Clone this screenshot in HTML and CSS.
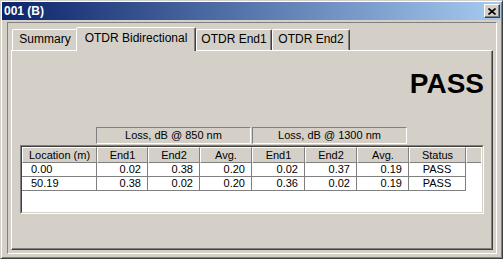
FILE: index.html
```html
<!DOCTYPE html>
<html>
<head>
  <title>001 (B)</title>
  <link rel="stylesheet" href="styles.css">
</head>
<body>

  <div class="window">
    <div class="titlebar">
      <span class="title">001 (B)</span>
      <span class="close-btn">
        <svg width="8" height="7" viewBox="0 0 8 7">
          <path d="M0.5 0.5 L7.5 6.5 M7.5 0.5 L0.5 6.5" stroke="#000" stroke-width="1.6" fill="none"/>
        </svg>
      </span>
    </div>

    <div class="frame">
      <div class="tabs">
        <div class="tab tab-summary">Summary</div>
        <div class="tab tab-bidir active">OTDR Bidirectional</div>
        <div class="tab tab-end1">OTDR End1</div>
        <div class="tab tab-end2">OTDR End2</div>
      </div>

      <div class="panel">
        <div class="verdict">PASS</div>

        <div class="groups">
          <div class="group">Loss, dB @ 850 nm</div>
          <div class="group">Loss, dB @ 1300 nm</div>
        </div>

        <div class="grid-box">
          <div class="grid-inner">
            <table class="grid">
              <colgroup>
                <col style="width:75px">
                <col style="width:51px">
                <col style="width:52px">
                <col style="width:52px">
                <col style="width:53px">
                <col style="width:52px">
                <col style="width:52px">
                <col style="width:57px">
                <col style="width:15px">
              </colgroup>
              <thead>
                <tr>
                  <th>Location (m)</th>
                  <th>End1</th>
                  <th>End2</th>
                  <th>Avg.</th>
                  <th>End1</th>
                  <th>End2</th>
                  <th>Avg.</th>
                  <th>Status</th>
                  <th class="fill"></th>
                </tr>
              </thead>
              <tbody>
                <tr>
                  <td class="loc">0.00</td>
                  <td>0.02</td>
                  <td>0.38</td>
                  <td>0.20</td>
                  <td>0.02</td>
                  <td>0.37</td>
                  <td>0.19</td>
                  <td class="status">PASS</td>
                  <td class="fill"></td>
                </tr>
                <tr>
                  <td class="loc">50.19</td>
                  <td>0.38</td>
                  <td>0.02</td>
                  <td>0.20</td>
                  <td>0.36</td>
                  <td>0.02</td>
                  <td>0.19</td>
                  <td class="status">PASS</td>
                  <td class="fill"></td>
                </tr>
              </tbody>
            </table>
          </div>
        </div>
      </div>
    </div>
  </div>

</body>
</html>
```

FILE: styles.css
```css
* {
  box-sizing: border-box;
}

body {
  margin: 0;
  background-color: #d4d0c8;
  font-family: "Liberation Sans", Arial, sans-serif;
  font-size: 12px;
  color: #000;
}

.window {
  width: 503px;
  height: 259px;
  display: flex;
  flex-direction: column;
  border: 1px solid;
  border-color: #d4d0c8 #404040 #404040 #d4d0c8;
  box-shadow: inset 1px 1px #fff, inset -1px -1px #808080;
  padding: 1px;
}

.titlebar {
  height: 18px;
  flex: none;
  display: flex;
  align-items: center;
  justify-content: space-between;
  background: linear-gradient(to right, #0a246a, #a6caf0);
  color: #fff;
}

.title {
  padding-left: 2px;
  font-weight: bold;
  font-size: 12px;
}

.close-btn {
  width: 16px;
  height: 14px;
  margin-right: 1px;
  display: flex;
  align-items: center;
  justify-content: center;
  background-color: #d4d0c8;
  border: 1px solid;
  border-color: #fff #404040 #404040 #fff;
  box-shadow: inset -1px -1px #808080;
}

.frame {
  flex: 1;
  display: flex;
  flex-direction: column;
  margin: 2px 4px 3px 5px;
  border: 1px solid;
  border-color: #808080 #fff #fff #808080;
  padding: 4px 3px 3px 3px;
}

/* tabs */
.tabs {
  height: 23px;
  flex: none;
  display: flex;
  align-items: flex-end;
  padding-left: 1px;
}

.tab {
  height: 21px;
  border: 1px solid;
  border-bottom: none;
  border-color: #fff #404040 transparent #fff;
  border-radius: 2px 2px 0 0;
  box-shadow: inset -1px 0 #808080;
  text-align: center;
  line-height: 19px;
  white-space: nowrap;
}

.tab-summary { width: 66px; }
.tab-bidir { width: 120px; }
.tab-end1 { width: 76px; }
.tab-end2 { width: 78px; }

.tab.active {
  height: 24px;
  margin-left: -2px;
  margin-bottom: -1px;
  line-height: 21px;
  background-color: #d4d0c8;
  z-index: 1;
}

.panel {
  flex: 1;
  border: 1px solid;
  border-color: #fff #404040 #404040 #fff;
  box-shadow: inset -1px -1px #808080;
  padding: 0 8px;
}

.verdict {
  margin-top: 17px;
  text-align: right;
  font-weight: bold;
  font-size: 28px;
  line-height: 32px;
}

.groups {
  display: flex;
  gap: 1px;
  margin-top: 27px;
  margin-left: 76px;
}

.group {
  width: 155px;
  height: 17px;
  border: 1px solid;
  border-color: #808080 #fff #fff #808080;
  text-align: center;
  font-size: 11px;
  line-height: 15px;
}

/* table */
.grid-box {
  margin-top: 1px;
  height: 69px;
  border: 1px solid;
  border-color: #808080 #fff #fff #808080;
  background-color: #fff;
}

.grid-inner {
  height: 100%;
  border: 1px solid;
  border-color: #404040 #d4d0c8 #d4d0c8 #404040;
}

.grid {
  width: 459px;
  table-layout: fixed;
  border-collapse: separate;
  border-spacing: 0;
  font-size: 11px;
}

.grid th {
  height: 16px;
  padding: 0;
  font-weight: normal;
  line-height: 14px;
  background-color: #d4d0c8;
  border: 1px solid;
  border-color: #fff #808080 #808080 #fff;
  text-align: center;
}

.grid td {
  height: 14px;
  padding: 0 6px 0 0;
  line-height: 13px;
  border-right: 1px solid #808080;
  border-bottom: 1px solid #808080;
  text-align: right;
}

.grid td.loc {
  text-align: left;
  padding-left: 9px;
}

.grid td.status {
  text-align: center;
  padding: 0;
}

.grid td.fill {
  border: none;
}

.grid th.fill {
  border-right: none;
}
```
